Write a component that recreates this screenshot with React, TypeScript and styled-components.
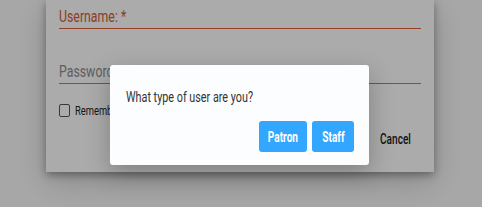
import React from 'react';
import styled, { createGlobalStyle } from 'styled-components';

const GlobalStyle = createGlobalStyle`
  html, body {
    margin: 0;
    padding: 0;
    background: #fafafa;
    font-family: Roboto, "Liberation Sans", sans-serif;
    overflow: hidden;
  }
`;

const Page = styled.div`
  position: relative;
  width: 482px;
  height: 207px;
  padding-left: 46px;
  box-sizing: border-box;
`;

const Card = styled.div`
  width: 388px;
  height: 172px;
  background: #ffffff;
  box-shadow: 0 3px 8px rgba(0, 0, 0, 0.35), 0 10px 30px rgba(0, 0, 0, 0.18);
  padding: 3px 13px 0;
  box-sizing: border-box;
  display: flex;
  flex-direction: column;
`;

const Field = styled.div<{ $active?: boolean }>`
  height: ${({ $active }) => ($active ? '23px' : '19px')};
  display: flex;
  align-items: flex-end;
  padding-bottom: 2px;
  border-bottom: ${({ $active }) => ($active ? '1.5px solid #e0603a' : '1px solid #8a8a8a')};
  font-size: 16px;
  color: ${({ $active }) => ($active ? '#d85a33' : '#8c8c8c')};
`;

// the screenshot text is horizontally condensed
const Label = styled.span<{ $origin?: string; $scale?: number }>`
  display: inline-block;
  transform: scaleX(${({ $scale }) => $scale ?? 0.72});
  transform-origin: ${({ $origin }) => $origin ?? 'left'};
  white-space: nowrap;
`;

const Spacer = styled.div<{ $h: number }>`
  height: ${({ $h }) => $h}px;
  flex: none;
`;

const CheckRow = styled.label`
  display: flex;
  align-items: center;
  gap: 5px;
  font-size: 13px;
  color: #222;
`;

const Box = styled.span`
  width: 11px;
  height: 13px;
  border: 1.5px solid #555;
  border-radius: 2px;
  box-sizing: border-box;
`;

const Actions = styled.div`
  display: flex;
  justify-content: flex-end;
  padding-right: 10px;
  margin-top: 13px;
`;

const TextButton = styled.span`
  font-size: 14px;
  font-weight: 500;
  color: #1a1a1a;
`;

const Overlay = styled.div`
  position: absolute;
  inset: 0;
  background: rgba(0, 0, 0, 0.33);
`;

const Dialog = styled.div`
  position: absolute;
  left: 110px;
  top: 65px;
  width: 259px;
  height: 100px;
  background: #fbfdff;
  border-radius: 3px;
  box-shadow: 0 8px 24px rgba(0, 0, 0, 0.25);
  padding: 23px 15px 13px 16px;
  box-sizing: border-box;
  display: flex;
  flex-direction: column;
  justify-content: space-between;
`;

const Question = styled.div`
  font-size: 15px;
  color: #333;
`;

const Buttons = styled.div`
  display: flex;
  justify-content: flex-end;
  gap: 5px;
`;

const ChoiceButton = styled.button<{ $w: number }>`
  width: ${({ $w }) => $w}px;
  height: 31px;
  border: none;
  border-radius: 3px;
  background: #33a6ff;
  color: #fff;
  font-family: Roboto, "Liberation Sans", sans-serif;
  font-size: 14px;
  font-weight: 700;
  padding: 0;
  display: flex;
  align-items: center;
  justify-content: center;
`;

export default function App() {
  return (
    <>
      <GlobalStyle />
      <Page>
        <Card>
          <Field $active>
            <Label $scale={0.77}>Username: *</Label>
          </Field>
          <Spacer $h={33} />
          <Field>
            <Label $scale={0.77}>Password: *</Label>
          </Field>
          <Spacer $h={19} />
          <CheckRow>
            <Box />
            <Label>Remember me</Label>
          </CheckRow>
          <Actions>
            <TextButton>
              <Label $origin="right">Cancel</Label>
            </TextButton>
          </Actions>
        </Card>
        <Overlay />
        <Dialog>
          <Question>
            <Label>What type of user are you?</Label>
          </Question>
          <Buttons>
            <ChoiceButton $w={48}>
              <Label $origin="center">Patron</Label>
            </ChoiceButton>
            <ChoiceButton $w={42}>
              <Label $origin="center">Staff</Label>
            </ChoiceButton>
          </Buttons>
        </Dialog>
      </Page>
    </>
  );
}
